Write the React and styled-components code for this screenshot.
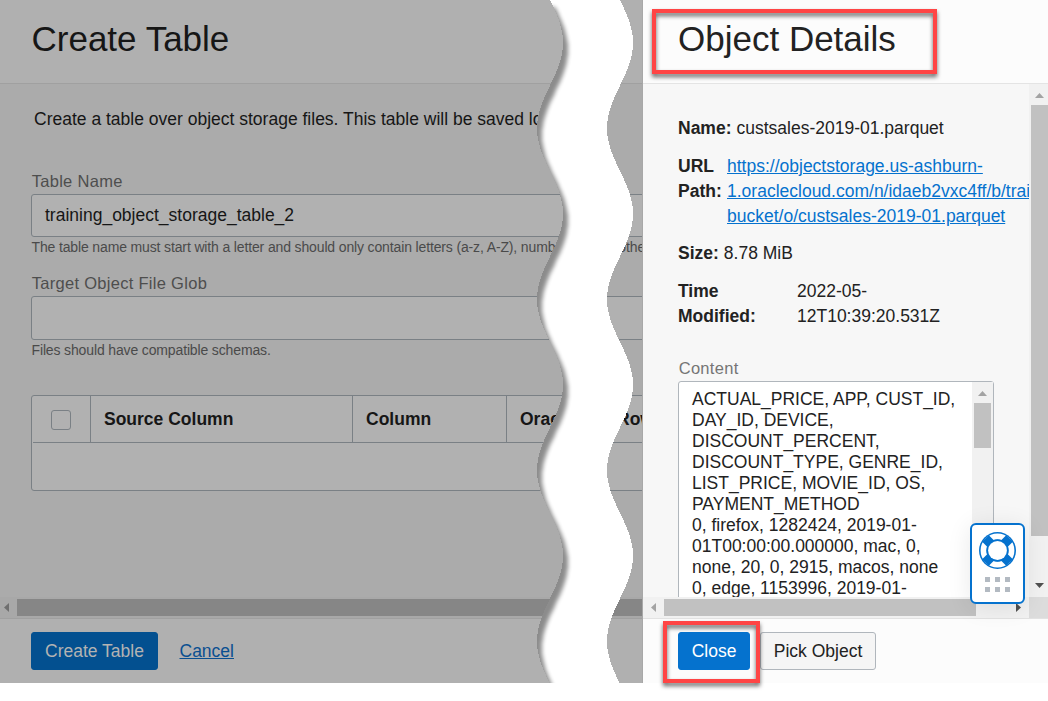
import React from "react";
import styled, { createGlobalStyle } from "styled-components";

const GlobalStyle = createGlobalStyle`
  * { box-sizing: border-box; }
  body {
    margin: 0;
    background: #fff;
    font-family: "Liberation Sans", Arial, sans-serif;
    font-size: 17.5px;
    color: #1f1f1f;
  }
`;

const Page = styled.div`
  position: relative;
  display: flex;
  width: 1048px;
  height: 701px;
  overflow: hidden;
  background: #fff;
`;

const Panel = styled.section`
  display: flex;
  flex-direction: column;
  flex: none;
  width: ${(p) => p.$width}px;
  height: 683px;
  overflow: hidden;
  background: ${(p) => (p.$dim ? "#b0b0b0" : "#fcfcfc")};
  color: ${(p) => (p.$dim ? "#161616" : "#222")};
`;

const Seam = styled.div`
  width: 1px;
  height: 683px;
  background: #a8a8a8;
`;

const PanelHeader = styled.header`
  flex: none;
  height: 84px;
  padding: ${(p) => (p.$dim ? "19px 0 0 31.5px" : "19px 0 0 35px")};
  border-bottom: 1px solid ${(p) => (p.$dim ? "#a0a0a0" : "#e4e4e4")};
`;

const Title = styled.h1`
  margin: 0;
  font-size: 35px;
  font-weight: 400;
  line-height: 40px;
  white-space: nowrap;
`;

const FormBody = styled.div`
  flex: none;
  height: 513px;
  padding: 22px 0 0 31px;
  background: #ababab;
  overflow: hidden;
  white-space: nowrap;
`;

const Intro = styled.p`
  margin: 0 0 40px 3px;
  line-height: 26px;
`;

const Label = styled.label`
  display: block;
  height: 22px;
  padding-left: 0.7px;
  line-height: 18px;
  font-size: 16.5px;
  letter-spacing: 0.29px;
  color: ${(p) => (p.$dim ? "#4e4e4e" : "#757575")};
`;

const Input = styled.div`
  width: 900px;
  height: ${(p) => p.$height}px;
  padding: 0 13px;
  line-height: 40px;
  background: #b1b1b1;
  border: 1px solid #7a8085;
  border-radius: 3px;
`;

const Hint = styled.p`
  margin: 0;
  height: ${(p) => p.$height}px;
  padding-left: 0.5px;
  font-size: 14px;
  letter-spacing: -0.14px;
  line-height: 21px;
  color: #4a4a4a;
`;

const Table = styled.div`
  width: 900px;
  height: 96px;
  background: #b1b1b1;
  border: 1px solid #7a8085;
  border-radius: 3px;
`;

const HeadRow = styled.div`
  display: flex;
  height: 47px;
  margin-left: 1px;
  border-bottom: 1px solid #7a8085;
`;

const HeadCell = styled.div`
  flex: none;
  width: ${(p) => p.$width}px;
  padding-left: 13px;
  line-height: 46px;
  font-weight: 700;
  border-right: ${(p) => (p.$last ? "none" : "1px solid #7a8085")};
`;

const CheckCell = styled(HeadCell)`
  display: flex;
  align-items: center;
  padding: 2px 0 0 18px;
`;

const Checkbox = styled.div`
  width: 20px;
  height: 20px;
  border: 1px solid #7a8085;
  border-radius: 3px;
`;

const HScroll = styled.div`
  flex: none;
  display: flex;
  align-items: center;
  width: 100%;
  height: 21px;
  background: ${(p) => (p.$dim ? "#a8a8a8" : "#f1f1f1")};
`;

const HThumb = styled.div`
  flex: none;
  width: ${(p) => p.$width}px;
  height: 17px;
  margin-left: ${(p) => p.$before || 0}px;
  margin-right: ${(p) => p.$after || 0}px;
  background: ${(p) => (p.$dim ? "#868686" : "#c1c1c1")};
`;

const ArrowBox = styled.div`
  flex: none;
  display: flex;
  align-items: center;
  justify-content: center;
  width: ${(p) => p.$w}px;
  height: ${(p) => p.$h}px;
  padding-top: ${(p) => p.$drop || 0}px;
  svg { display: block; }
`;

const ScrollCorner = styled.div`
  flex: none;
  width: 19px;
  height: 21px;
  margin-left: auto;
  background: #dcdcdc;
`;

const Footer = styled.footer`
  display: flex;
  flex: none;
  align-items: flex-start;
  height: 65px;
  padding: 13px 0 0 ${(p) => p.$left}px;
  border-top: 1px solid ${(p) => (p.$dim ? "#a0a0a0" : "#e2e2e2")};
`;

const Button = styled.button`
  flex: none;
  width: ${(p) => p.$width}px;
  height: 38px;
  margin-right: ${(p) => p.$gap || 0}px;
  padding: 0;
  font: inherit;
  line-height: 36px;
  white-space: nowrap;
  border-radius: 3px;
  border: 1px solid ${(p) => p.$border || p.$bg};
  background: ${(p) => p.$bg};
  color: ${(p) => p.$fg};
`;

const CancelLink = styled.a`
  line-height: 38px;
  color: #0a4f91;
  text-decoration: underline;
`;

const DetailsMain = styled.div`
  flex: none;
  display: flex;
  height: 513px;
  background: #f7f7f7;
`;

const Details = styled.div`
  flex: none;
  width: 386px;
  padding: 32px 0 0 35px;
  overflow: hidden;
`;

const Detail = styled.div`
  display: flex;
  gap: 5px;
  margin-bottom: 12.5px;
  line-height: 25px;
  white-space: nowrap;
`;

const Term = styled.b`
  flex: none;
  width: ${(p) => (p.$width ? `${p.$width}px` : "auto")};
`;

const UrlLink = styled.a`
  color: #0572ce;
  text-decoration: underline;
`;

const ContentLabel = styled(Label)`
  margin-top: 30px;
  height: 22px;
`;

const ContentBox = styled.div`
  display: flex;
  width: 316px;
  height: 300px;
  background: #fff;
  border: 1px solid #b0b6bc;
  border-radius: 3px;
`;

const ContentText = styled.div`
  flex: 1;
  padding: 7px 0 0 13px;
  line-height: 21px;
  white-space: pre;
`;

const VScroll = styled.div`
  flex: none;
  display: flex;
  flex-direction: column;
  align-items: flex-end;
  width: ${(p) => p.$width}px;
  padding-right: ${(p) => p.$pad || 0}px;
  background: #f1f1f1;
`;

const VThumb = styled.div`
  flex: none;
  width: 17px;
  height: ${(p) => p.$height}px;
  background: #c1c1c1;
`;

const Highlight = styled.div`
  position: absolute;
  left: ${(p) => p.$x}px;
  top: ${(p) => p.$y}px;
  width: ${(p) => p.$w}px;
  height: ${(p) => p.$h}px;
  border: 4px solid #ff4545;
  filter: drop-shadow(0 3px 2px rgba(0, 0, 0, 0.6));
  pointer-events: none;
`;

const TearLayer = styled.svg`
  position: absolute;
  left: 0;
  top: 0;
  pointer-events: none;
`;

const HelpWidget = styled.div`
  position: absolute;
  left: 970px;
  top: 523px;
  display: flex;
  flex-direction: column;
  align-items: center;
  width: 55px;
  height: 81px;
  padding-top: 7px;
  background: #fff;
  border: 2px solid #0572ce;
  border-radius: 6px;
  box-shadow: 0 3px 24px rgba(0, 0, 0, 0.09);
`;

const DotGrid = styled.div`
  display: grid;
  grid-template-columns: repeat(3, 5px);
  gap: 5px;
  margin-top: 8px;
`;

const Dot = styled.i`
  width: 5px;
  height: 5px;
  background: #b3bac2;
`;

const ARROWS = {
  left: [5, 9, "5,0 5,9 0,4.5"],
  right: [5, 9, "0,0 0,9 5,4.5"],
  up: [9, 5, "0,5 9,5 4.5,0"],
  down: [9, 5, "0,0 9,0 4.5,5"],
};

function Arrow({ dir, w, h, drop, color }) {
  const [aw, ah, points] = ARROWS[dir];
  return (
    <ArrowBox $w={w} $h={h} $drop={drop}>
      <svg width={aw} height={ah}>
        <polygon points={points} fill={color} />
      </svg>
    </ArrowBox>
  );
}

// One edge of the torn strip: a sine wave around the given x, stepped per pixel row.
function wave(mid) {
  const pts = [];
  for (let y = 0; y < 683; y += 1) {
    const x = Math.round(mid + 13 * Math.sin((2 * Math.PI * (y + 0.5)) / 171));
    pts.push(`${x},${y}`, `${x},${y + 1}`);
  }
  return pts;
}

function Tear() {
  const left = wave(550);
  const right = wave(620).reverse();
  const band = `M${left.join("L")}L${right.join("L")}Z`;
  const sheet = `M400,0L${left.join("L")}L556,700L400,700Z`;
  return (
    <TearLayer width="1048" height="683">
      <defs>
        <clipPath id="band">
          <path d={band} />
        </clipPath>
        <filter id="soft" x="-10%" y="-10%" width="120%" height="120%">
          <feGaussianBlur stdDeviation="1.9" />
        </filter>
      </defs>
      <path d={band} fill="#fff" />
      <g clipPath="url(#band)">
        <path d={sheet} transform="translate(5 7)" fill="#000" opacity="0.45" filter="url(#soft)" />
      </g>
    </TearLayer>
  );
}

function LifeRing() {
  return (
    <svg width="37" height="37" viewBox="-18.5 -18.5 37 37">
      <circle r="18.5" fill="#0572ce" />
      <circle r="13.9" fill="none" stroke="#fff" strokeWidth="6" />
      <path d="M-12,-12L12,12M12,-12L-12,12" stroke="#0572ce" strokeWidth="9.4" />
      <circle r="11.2" fill="#0572ce" />
      <circle r="9.4" fill="#fff" />
    </svg>
  );
}

const CONTENT = `ACTUAL_PRICE, APP, CUST_ID,
DAY_ID, DEVICE,
DISCOUNT_PERCENT,
DISCOUNT_TYPE, GENRE_ID,
LIST_PRICE, MOVIE_ID, OS,
PAYMENT_METHOD
0, firefox, 1282424, 2019-01-
01T00:00:00.000000, mac, 0,
none, 20, 0, 2915, macos, none
0, edge, 1153996, 2019-01-`;

function CreateTablePanel() {
  return (
    <Panel $dim $width={642}>
      <PanelHeader $dim>
        <Title>Create Table</Title>
      </PanelHeader>
      <FormBody>
        <Intro>Create a table over object storage files. This table will be saved lo</Intro>
        <Label $dim>Table Name</Label>
        <Input $height={43}>training_object_storage_table_2</Input>
        <Hint $height={37}>
          The table name must start with a letter and should only contain letters (a-z, A-Z), numbers, _. No other
        </Hint>
        <Label $dim>Target Object File Glob</Label>
        <Input $height={44} />
        <Hint $height={55}>Files should have compatible schemas.</Hint>
        <Table>
          <HeadRow>
            <CheckCell $width={58}>
              <Checkbox />
            </CheckCell>
            <HeadCell $width={262}>Source Column</HeadCell>
            <HeadCell $width={154}>Column</HeadCell>
            <HeadCell $width={97}>Oracle</HeadCell>
            <HeadCell $width={200} $last>Row</HeadCell>
          </HeadRow>
        </Table>
      </FormBody>
      <HScroll $dim>
        <Arrow dir="left" w={13} h={17} color="#6f6f6f" />
        <HThumb $dim $before={4} $width={700} />
      </HScroll>
      <Footer $dim $left={31}>
        <Button $width={127} $gap={21.5} $bg="#035090" $fg="#b3b3b3">Create Table</Button>
        <CancelLink>Cancel</CancelLink>
      </Footer>
    </Panel>
  );
}

function ObjectDetailsPanel() {
  return (
    <Panel $width={405}>
      <PanelHeader>
        <Title>Object Details</Title>
      </PanelHeader>
      <DetailsMain>
        <Details>
          <Detail>
            <Term>Name:</Term>
            <span>custsales-2019-01.parquet</span>
          </Detail>
          <Detail>
            <Term $width={44}>URL<br />Path:</Term>
            <UrlLink>
              https://objectstorage.us-ashburn-<br />
              1.oraclecloud.com/n/idaeb2vxc4ff/b/training-<br />
              bucket/o/custsales-2019-01.parquet
            </UrlLink>
          </Detail>
          <Detail>
            <Term>Size:</Term>
            <span>8.78 MiB</span>
          </Detail>
          <Detail>
            <Term $width={114}>Time<br />Modified:</Term>
            <span>2022-05-<br />12T10:39:20.531Z</span>
          </Detail>
          <ContentLabel>Content</ContentLabel>
          <ContentBox>
            <ContentText>{CONTENT}</ContentText>
            <VScroll $width={21} $pad={2}>
              <Arrow dir="up" w={17} h={21} drop={2} color="#a3a3a3" />
              <VThumb $height={45} />
            </VScroll>
          </ContentBox>
        </Details>
        <VScroll $width={19}>
          <Arrow dir="up" w={17} h={21} drop={2} color="#a3a3a3" />
          <VThumb $height={431} />
          <Arrow dir="down" w={17} h={98} color="#505050" />
        </VScroll>
      </DetailsMain>
      <HScroll>
        <Arrow dir="left" w={21} h={17} color="#a3a3a3" />
        <HThumb $width={312} $after={32} />
        <Arrow dir="right" w={21} h={17} color="#505050" />
        <ScrollCorner />
      </HScroll>
      <Footer $left={35}>
        <Button $width={72} $gap={10} $bg="#0572ce" $fg="#fff">Close</Button>
        <Button $width={116} $bg="#f5f5f5" $border="#b0b6bc" $fg="#222">Pick Object</Button>
      </Footer>
    </Panel>
  );
}

export default function App() {
  return (
    <>
      <GlobalStyle />
      <Page>
        <CreateTablePanel />
        <Seam />
        <ObjectDetailsPanel />
        <Tear />
        <Highlight $x={652} $y={9} $w={285} $h={65} />
        <Highlight $x={663} $y={621} $w={97} $h={62} />
        <HelpWidget>
          <LifeRing />
          <DotGrid>
            {[0, 1, 2, 3, 4, 5].map((i) => (
              <Dot key={i} />
            ))}
          </DotGrid>
        </HelpWidget>
      </Page>
    </>
  );
}
